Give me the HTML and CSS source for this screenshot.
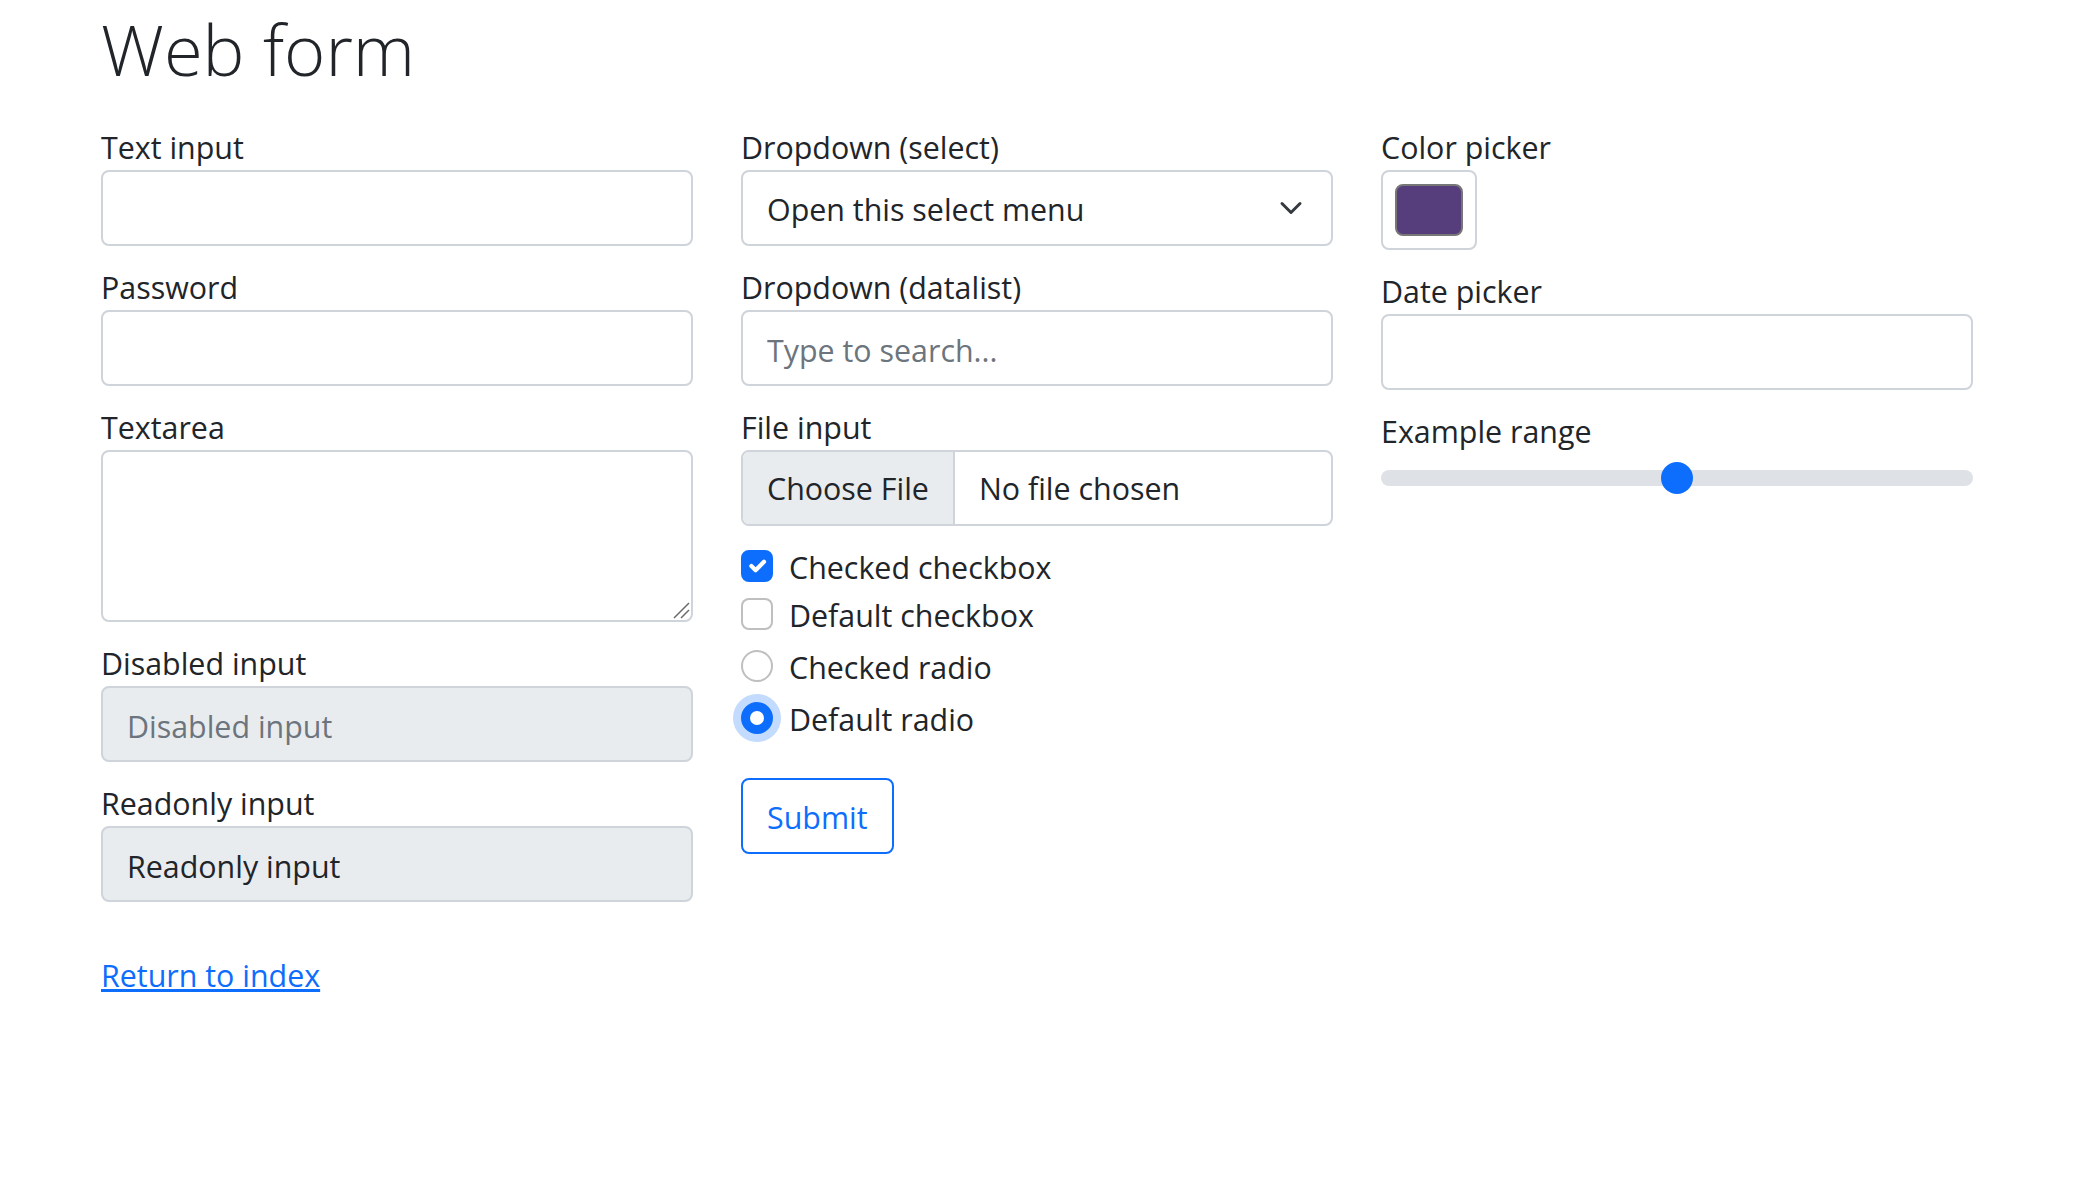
FILE: index.html
```html
<!DOCTYPE html>
<html lang="en">
<head>
<meta charset="utf-8">
<title>Web form</title>
<link rel="stylesheet" href="styles.css">
</head>
<body>
<main class="container">
  <h1 class="title">Web form</h1>
  <form class="form-row" action="#">
    <div class="col">
      <label class="field"><span class="lbl">Text input</span>
        <input class="control" type="text" name="my-text">
      </label>
      <label class="field"><span class="lbl">Password</span>
        <input class="control" type="password" name="my-password">
      </label>
      <label class="field"><span class="lbl">Textarea</span>
        <span class="textarea-wrap">
          <textarea class="control textarea" name="my-textarea" rows="3"></textarea>
          <svg class="grip" width="18" height="18" viewBox="0 0 18 18"><path d="M2 17 17 2M9 17l8-8" fill="none" stroke="#6b6b6b" stroke-width="1.5"/></svg>
        </span>
      </label>
      <label class="field"><span class="lbl">Disabled input</span>
        <input class="control is-disabled" type="text" name="my-disabled" placeholder="Disabled input" disabled>
      </label>
      <label class="field"><span class="lbl">Readonly input</span>
        <input class="control is-readonly" type="text" name="my-readonly" value="Readonly input" readonly>
      </label>
    </div>

    <div class="col">
      <label class="field"><span class="lbl">Dropdown (select)</span>
        <span class="control select">
          <span>Open this select menu</span>
          <svg class="chevron" width="32" height="24" viewBox="0 0 16 16"><path d="m2 5 6 6 6-6" fill="none" stroke="#343a40" stroke-width="2" stroke-linecap="round" stroke-linejoin="round"/></svg>
        </span>
      </label>
      <label class="field"><span class="lbl">Dropdown (datalist)</span>
        <input class="control" type="text" name="my-datalist" placeholder="Type to search...">
      </label>
      <label class="field"><span class="lbl">File input</span>
        <span class="control file">
          <span class="file-btn">Choose File</span>
          <span class="file-name">No file chosen</span>
        </span>
      </label>
      <label class="check">
        <span class="box checkbox is-checked"><svg width="28" height="28" viewBox="0 0 20 20"><path d="M6 10l3 3l6-6" fill="none" stroke="#fff" stroke-width="3" stroke-linecap="round" stroke-linejoin="round"/></svg></span>
        <span class="check-text">Checked checkbox</span>
      </label>
      <label class="check">
        <span class="box checkbox"></span>
        <span class="check-text">Default checkbox</span>
      </label>
      <label class="check check-gap">
        <span class="box radio"></span>
        <span class="check-text">Checked radio</span>
      </label>
      <label class="check check-gap">
        <span class="box radio is-checked is-focused"><span class="dot"></span></span>
        <span class="check-text">Default radio</span>
      </label>
      <button class="btn-outline" type="button">Submit</button>
    </div>

    <div class="col">
      <label class="field"><span class="lbl">Color picker</span>
        <span class="color-ctl"><span class="swatch"></span></span>
      </label>
      <label class="field"><span class="lbl">Date picker</span>
        <input class="control" type="text" name="my-date">
      </label>
      <label class="field"><span class="lbl">Example range</span>
        <input class="range" type="range" name="my-range" min="0" max="10" step="1" value="5">
      </label>
    </div>
  </form>
  <div class="link-row">
    <a href="#" class="link">Return to index</a>
  </div>
</main>
</body>
</html>
```

FILE: styles.css
```css
* {
  box-sizing: border-box;
}

html, body {
  margin: 0;
  padding: 0;
  background: #fff;
}

body {
  font-family: "Open Sans", "Noto Sans", "Liberation Sans", sans-serif;
  font-size: 30.4px;
  line-height: 48px;
  color: #212529;
}

.container {
  width: 1920px;
  margin: 0 auto;
  padding: 0 24px;
}

.title {
  height: 90px;
  margin: 0 0 16px;
  padding-top: 4px;
  font-size: 70.5px;
  font-weight: 300;
  line-height: 90px;
  color: #212529;
}

.form-row {
  display: grid;
  grid-template-columns: repeat(3, 1fr);
  column-gap: 48px;
  margin: 0;
}

.col {
  padding: 16px 0;
  display: flex;
  flex-direction: column;
  align-items: stretch;
}

.field {
  display: block;
  margin-bottom: 16px;
}

.lbl {
  display: block;
  height: 48px;
  padding-top: 2px;
}

.control {
  display: block;
  width: 100%;
  height: 76px;
  padding: 14px 24px 10px;
  font: inherit;
  line-height: 48px;
  color: #212529;
  background: #fff;
  border: 2px solid #ced4da;
  border-radius: 8px;
  outline: none;
  margin: 0;
}

.control::placeholder {
  color: #6c757d;
  opacity: 1;
}

.textarea-wrap {
  display: block;
  position: relative;
}

.textarea {
  height: 172px;
  resize: none;
}

.grip {
  position: absolute;
  right: 3px;
  bottom: 3px;
  display: block;
}

.is-disabled,
.is-readonly {
  background: #e9ecef;
  opacity: 1;
}

.is-disabled {
  color: #6c757d;
}

.select {
  display: flex;
  align-items: center;
  justify-content: space-between;
}

.chevron {
  flex: none;
  display: block;
  margin-top: -4px;
}

.file {
  display: flex;
  align-items: stretch;
  padding: 0;
  overflow: hidden;
}

.file-btn {
  padding: 13px 24px 11px;
  background: #e9ecef;
  border-right: 2px solid #ced4da;
  margin-right: 24px;
  line-height: 48px;
}

.file-name {
  padding-top: 2px;
  line-height: 70px;
}

.check {
  display: flex;
  align-items: flex-start;
  height: 48px;
  margin: 0;
}

.check-gap {
  margin-top: 4px;
}

.check-text {
  display: block;
  padding-top: 2px;
  line-height: 48px;
}

.box {
  flex: none;
  width: 32px;
  height: 32px;
  margin-top: 8px;
  margin-right: 16px;
  border: 2px solid rgba(0, 0, 0, 0.25);
  background: #fff;
  display: flex;
  align-items: center;
  justify-content: center;
}

.checkbox {
  border-radius: 8px;
}

.radio {
  border-radius: 50%;
}

.box.is-checked {
  background: #0d6efd;
  border-color: #0d6efd;
}

.box svg {
  display: block;
}

.is-focused {
  box-shadow: 0 0 0 8px rgba(13, 110, 253, 0.25);
}

.dot {
  width: 14px;
  height: 14px;
  border-radius: 50%;
  background: #fff;
}

.btn-outline {
  align-self: flex-start;
  margin-top: 36px;
  padding: 14px 24px 10px;
  font: inherit;
  line-height: 48px;
  color: #0d6efd;
  background: transparent;
  border: 2px solid #0d6efd;
  border-radius: 8px;
}

.color-ctl {
  display: block;
  width: 96px;
  height: 80px;
  padding: 12px;
  border: 2px solid #ced4da;
  border-radius: 8px;
  background: #fff;
}

.swatch {
  display: block;
  width: 100%;
  height: 100%;
  background: #563d7c;
  border: 2px solid #777;
  border-radius: 8px;
}

.range {
  -webkit-appearance: none;
  appearance: none;
  display: block;
  width: 100%;
  height: 48px;
  margin: 0;
  padding: 0;
  background: transparent;
}

.range::-webkit-slider-runnable-track {
  height: 16px;
  background: #dee2e6;
  border: 0;
  border-radius: 32px;
}

.range::-webkit-slider-thumb {
  -webkit-appearance: none;
  appearance: none;
  width: 32px;
  height: 32px;
  margin-top: -8px;
  background: #0d6efd;
  border: 0;
  border-radius: 50%;
}

.link-row {
  padding: 18px 0 14px;
}

.link {
  color: #0d6efd;
  text-decoration: underline;
}
```
